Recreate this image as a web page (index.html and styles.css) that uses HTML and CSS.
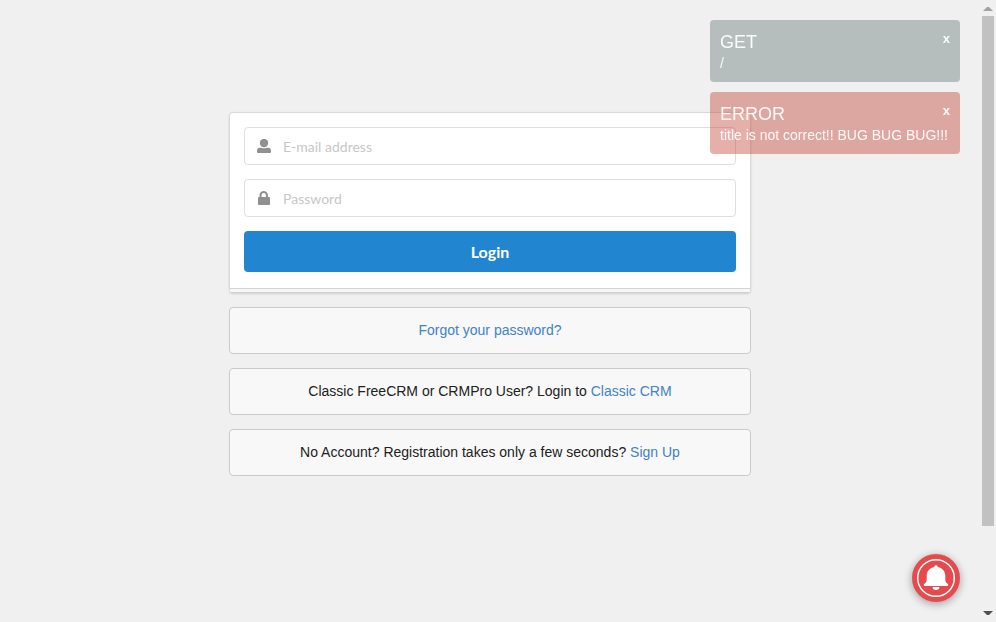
FILE: index.html
```html
<!DOCTYPE html>
<html lang="en">
<head>
<meta charset="utf-8">
<meta name="viewport" content="width=device-width, initial-scale=1">
<title>Login</title>
<link rel="stylesheet" href="styles.css">
</head>
<body>
<div class="page">
  <main class="content">
    <form class="login-card">
      <div class="field">
        <svg class="field-icon" viewBox="0 0 14 14" aria-hidden="true"><circle cx="7" cy="4" r="4.200"/><path d="M0 13v-1.500a3 3 0 0 1 3-2.800h1q3 1.300 6 0h1a3 3 0 0 1 3 2.800V13q0 1-1 1H1q-1 0-1-1z"/></svg>
        <input class="field-input" type="email" placeholder="E-mail address" aria-label="E-mail address">
      </div>
      <div class="field">
        <svg class="field-icon" viewBox="0 0 14 14" aria-hidden="true"><path fill-rule="evenodd" d="M2.500 6V4.200a4.200 4.200 0 0 1 8.400 0V6H12q1 0 1 1v6q0 1-1 1H2q-1 0-1-1V7q0-1 1-1zm2 0h4.400V4.200a2.200 2.200 0 0 0-4.400 0z"/></svg>
        <input class="field-input" type="password" placeholder="Password" aria-label="Password">
      </div>
      <button class="login-button" type="button">Login</button>
    </form>
    <div class="message"><a href="#">Forgot your password?</a></div>
    <div class="message">Classic FreeCRM or CRMPro User? Login to <a href="#">Classic CRM</a></div>
    <div class="message">No Account? Registration takes only a few seconds? <a href="#">Sign Up</a></div>
  </main>
  <div class="scrollbar" aria-hidden="true">
    <svg class="scroll-arrow up" viewBox="0 0 16 16"><path d="M3 11h10L9 7H7z"/></svg>
    <div class="scroll-track"><div class="scroll-thumb"></div></div>
    <svg class="scroll-arrow down" viewBox="0 0 16 16"><path d="M3 5h10L9 9H7z"/></svg>
  </div>
</div>
<div class="toasts">
  <section class="toast notice">
    <button class="toast-close" type="button" aria-label="Close">x</button>
    <div class="toast-title">GET</div>
    <div class="toast-text">/</div>
  </section>
  <section class="toast error">
    <button class="toast-close" type="button" aria-label="Close">x</button>
    <div class="toast-title">ERROR</div>
    <div class="toast-text">title is not correct!! BUG BUG BUG!!!</div>
  </section>
</div>
<button class="bell" type="button" aria-label="Notifications">
  <svg viewBox="0 0 48 48" aria-hidden="true"><circle cx="24" cy="24" r="18.300" fill="none" stroke="#fff" stroke-width="1.500"/><path fill="#fff" d="M24 11.300c1 0 1.700.7 1.700 1.600 4.500.8 7.600 4.200 7.600 8.600v4c0 2 .8 3.200 2.300 4.300.8.600.7 2.200-.4 2.200H12.800c-1.100 0-1.200-1.600-.4-2.200 1.500-1.100 2.300-2.300 2.300-4.300v-4c0-4.400 3.100-7.800 7.600-8.600 0-.9.700-1.600 1.700-1.600zM20.500 33h7c0 2-1.500 3-3.500 3s-3.500-1-3.500-3z"/></svg>
</button>
</body>
</html>
```

FILE: styles.css
```css
* { box-sizing: border-box; }

body {
  margin: 0;
  background: #f0f0f0;
  color: #212121;
  font: 14px/20px "Liberation Sans", Arial, sans-serif;
}

.page {
  display: flex;
  min-height: 100vh;
}

.content {
  flex: 1;
  display: flex;
  flex-direction: column;
  align-items: center;
  gap: 14px;
  padding: 112px 14px 14px;
}

.login-card,
.message {
  width: 100%;
  max-width: 522px;
  border-radius: 4px;
}

.login-card {
  position: relative;
  display: flex;
  flex-direction: column;
  gap: 14px;
  padding: 14px 14px 20px;
  background: #fff;
  border: 1px solid #d9d9d9;
  border-bottom-color: #cfcfcf;
  box-shadow: 0 1px 2px rgba(34, 36, 38, .15);
}

.login-card::after {
  content: "";
  position: absolute;
  right: 0;
  bottom: 0;
  left: 0;
  height: 3px;
  background: #f8f8f8;
  border-top: 1px solid #d4d4d4;
}

.field {
  display: flex;
  align-items: center;
  height: 38px;
  padding-left: 12px;
  border: 1px solid #dededf;
  border-radius: 4px;
}

.field:focus-within { border-color: #85b7d9; }

.field-icon {
  flex: none;
  width: 14px;
  height: 14px;
  fill: #909090;
}

.field-input {
  flex: 1;
  min-width: 0;
  height: 36px;
  padding: 0 12px;
  border: 0;
  outline: 0;
  background: none;
  color: #212121;
  font: 14px/17px Lato, sans-serif;
}

.field-input::placeholder { color: #c7c7c7; }

.login-button {
  height: 41px;
  padding: 0 12px;
  border: 0;
  border-radius: 4px;
  background: #2185d0;
  color: #fff;
  font: bold 16px/16px Lato, sans-serif;
  cursor: pointer;
}

.message {
  padding: 12px 14px 13px;
  border: 1px solid #c9caca;
  background: #f8f8f8;
  text-align: center;
}

.message a {
  color: #4183c4;
  text-decoration: none;
}

.scrollbar {
  position: sticky;
  top: 0;
  display: flex;
  flex-direction: column;
  width: 16px;
  height: 100vh;
}

.scroll-arrow {
  width: 16px;
  height: 16px;
}

.up { fill: #a3a3a3; }
.down { fill: #505050; }

.scroll-track {
  flex: 1;
  padding: 0 2px;
}

.scroll-thumb {
  height: 86.5%;
  background: #c1c1c1;
}

.toasts {
  position: fixed;
  top: 20px;
  right: 36px;
  display: flex;
  flex-direction: column;
  gap: 10px;
  width: 250px;
}

.toast {
  padding: 10px;
  border-radius: 4px;
  color: rgba(255, 255, 255, .92);
}

.notice { background: rgba(127, 143, 140, .52); }
.error { background: rgba(192, 57, 43, .4); }

.toast-close {
  float: right;
  padding: 0;
  border: 0;
  background: none;
  color: inherit;
  font: bold 13px/18px "Liberation Sans", Arial, sans-serif;
  cursor: pointer;
}

.toast-title {
  font-size: 18px;
  line-height: 24px;
}

.toast-text {
  line-height: 18px;
  white-space: nowrap;
}

.bell {
  position: fixed;
  right: 36px;
  bottom: 20px;
  width: 48px;
  height: 48px;
  padding: 0;
  border: 0;
  border-radius: 50%;
  background: #e54b4d;
  box-shadow: 0 2px 8px rgba(0, 0, 0, .35);
  cursor: pointer;
}

.bell svg { display: block; }
```
